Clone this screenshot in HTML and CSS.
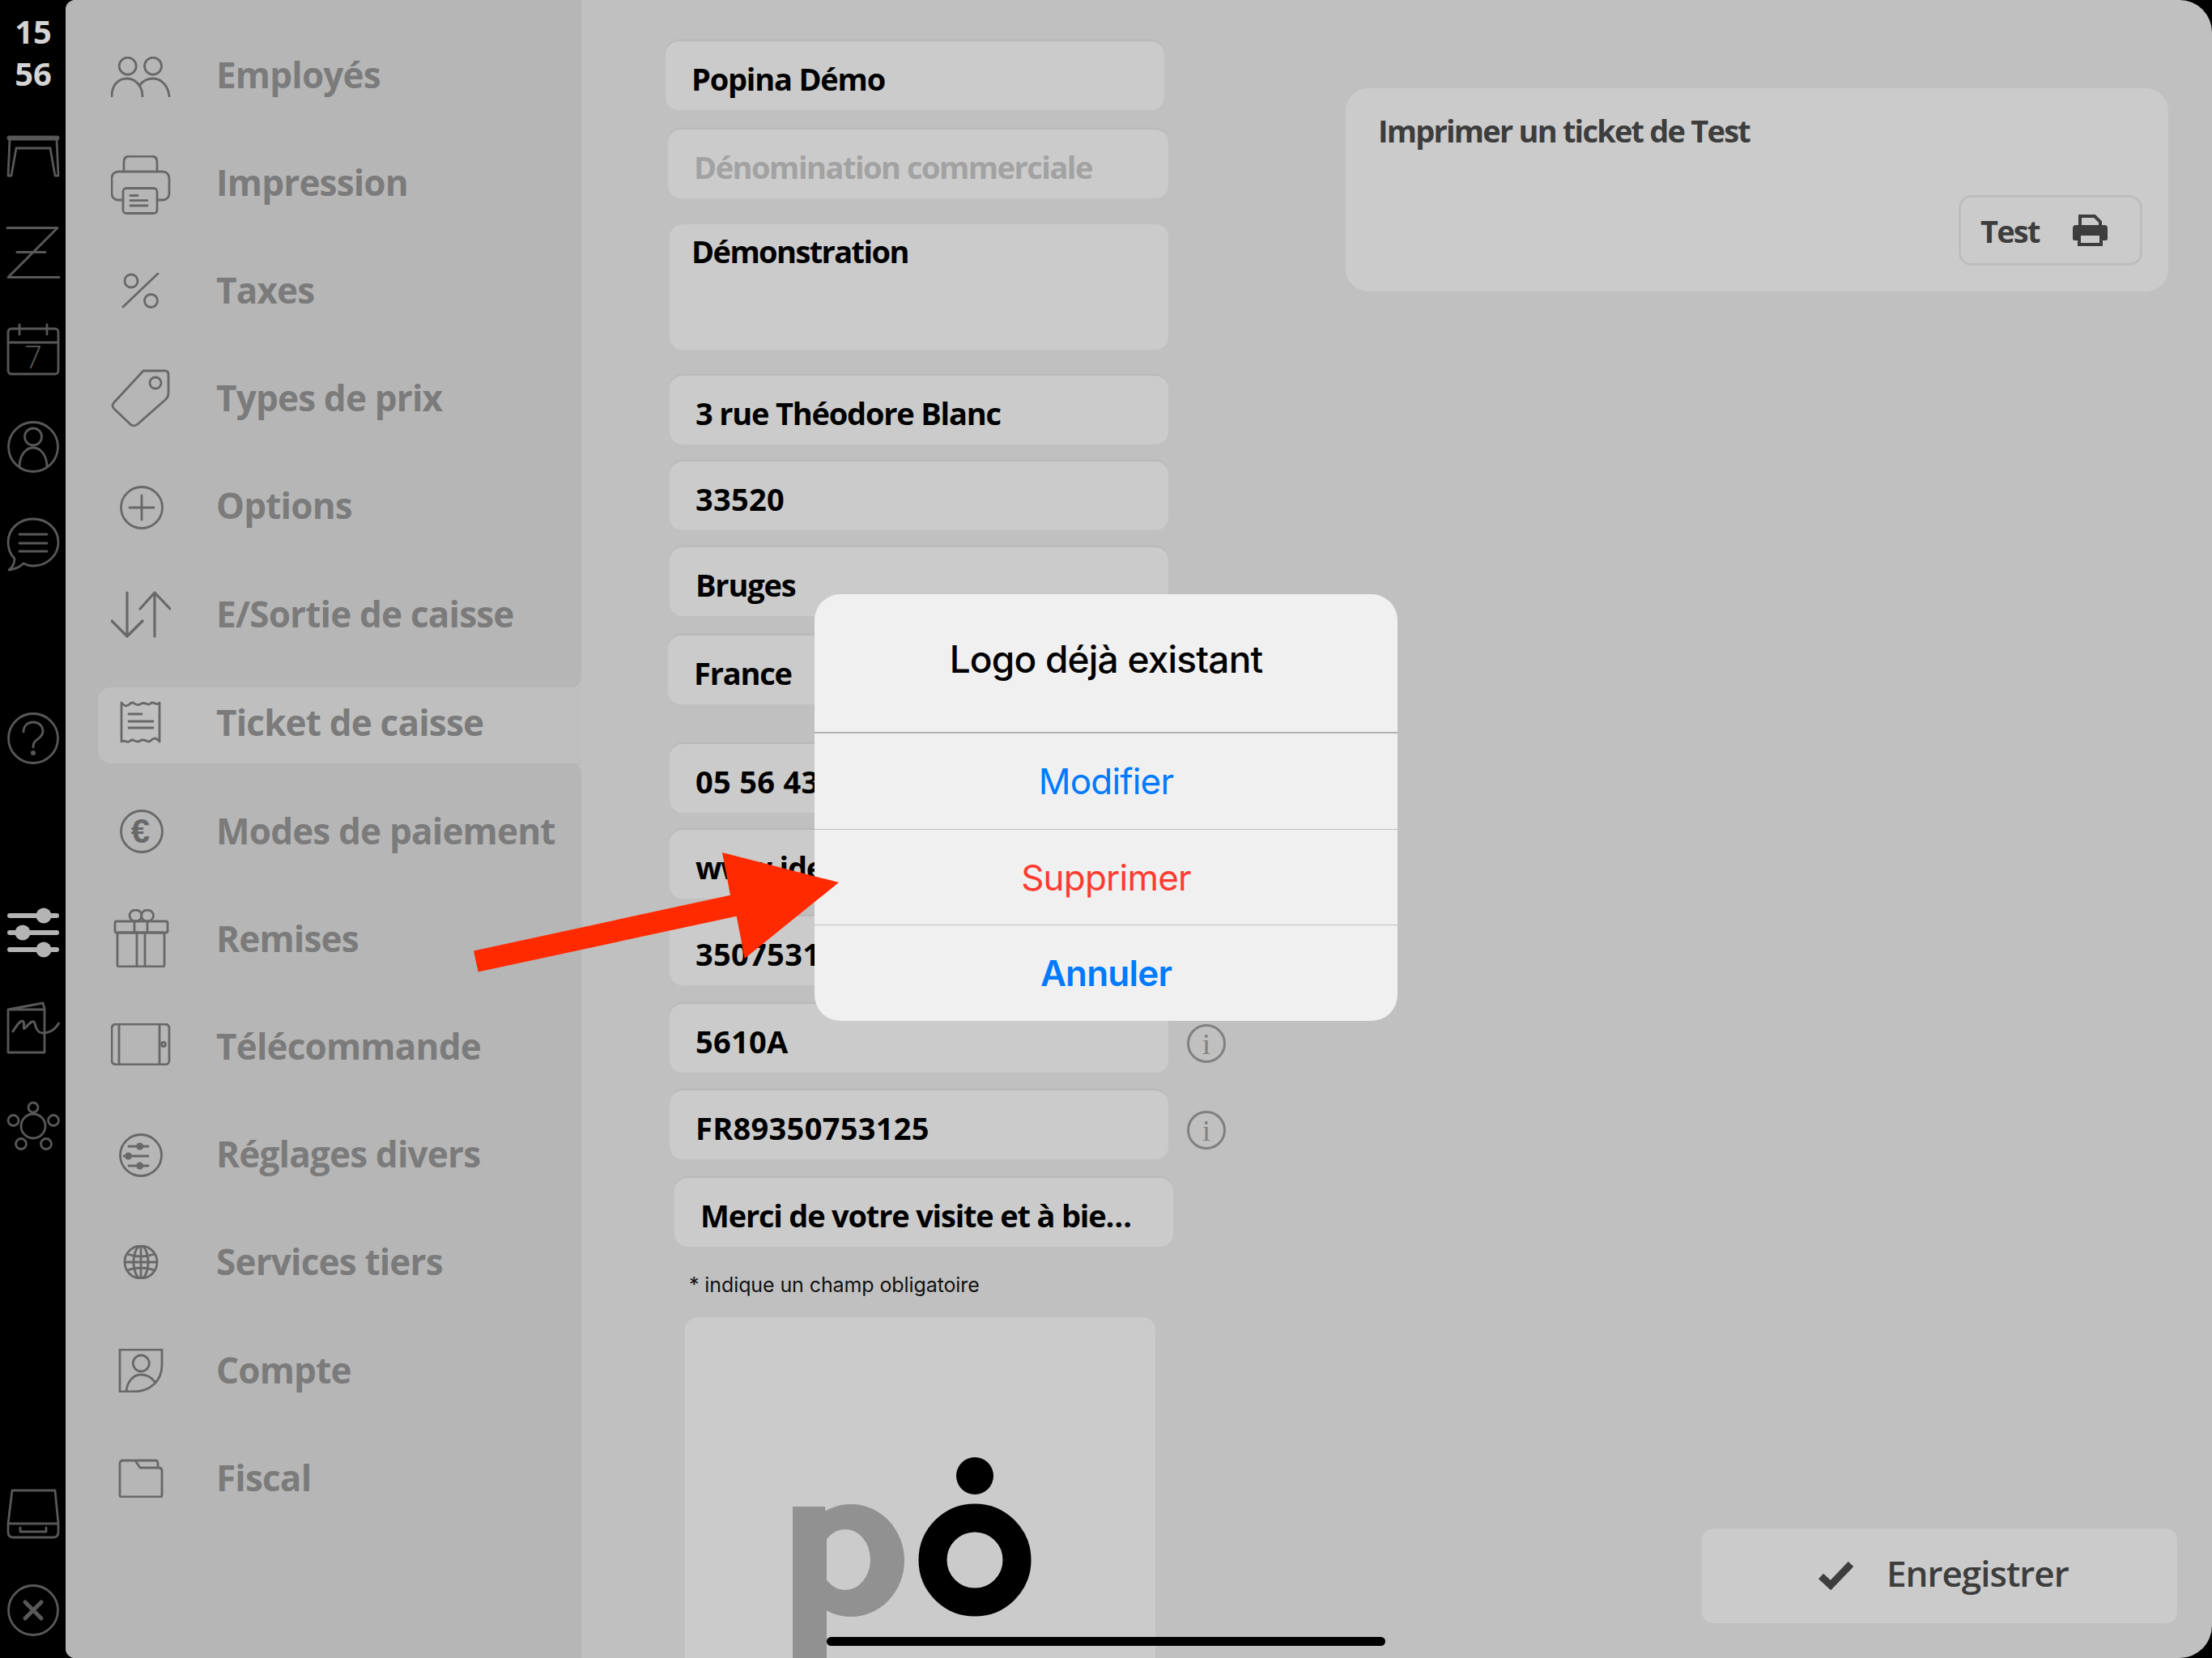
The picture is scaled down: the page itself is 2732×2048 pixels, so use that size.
FILE: index.html
```html
<!DOCTYPE html>
<html lang="fr">
<head>
<meta charset="utf-8">
<title>Ticket de caisse</title>
<link rel="stylesheet" href="styles.css">
</head>
<body>
<div class="app">
  <nav class="rail">
    <div class="clock">15<br>56</div>
    <svg class="ri r-table" width="64" height="51" viewBox="0 0 64 51"><rect x="1" y="1" width="62" height="3" rx="1.5"/><path d="M3 4 L1 49 L5 49 L11 15 H53 L59 49 L63 49 L61 4"/></svg>
    <svg class="ri r-z" width="64" height="64" viewBox="0 0 64 64"><path d="M0 1.5 H62 L1 62.5 H64 M12 31.5 H47" stroke-width="3"/></svg>
    <svg class="ri r-cal" width="64" height="63" viewBox="0 0 64 63"><rect x="1" y="5" width="62" height="56" rx="4"/><path d="M1 22 H63 M15 0 V12 M49 0 V12"/><text class="cal7" x="32" y="54" text-anchor="middle">7</text></svg>
    <svg class="ri r-user" width="64" height="64" viewBox="0 0 64 64"><circle cx="32" cy="32" r="30.5"/><circle cx="32" cy="19.5" r="10.5"/><path d="M15 57 C15 42 23 33 32 33 C41 33 49 42 49 57"/></svg>
    <svg class="ri r-chat" width="64" height="66" viewBox="0 0 64 66"><path d="M32 1 C15 1 1 13 1 30 C1 38 4 45 9 50 C9 56 6 61 2 64 C10 63 16 60 20 56 C24 58 28 59 32 59 C49 59 63 46 63 30 C63 13 49 1 32 1 Z"/><path d="M15 20 H49 M15 31 H49 M15 41 H49"/></svg>
    <svg class="ri r-help" width="64" height="64" viewBox="0 0 64 64"><circle cx="32" cy="32" r="30.5"/><path d="M20 24 C20 16 26 12 32 12 C39 12 44 17 44 23 C44 30 38 32 34 36 C32 38 32 40 32 43"/><circle class="fill" cx="32" cy="50" r="3"/></svg>
    <svg class="ri r-sliders" width="64" height="62" viewBox="0 0 64 62"><path d="M3 10 H61 M3 31 H61 M3 52 H61"/><circle class="k" cx="45" cy="10" r="9.5"/><circle class="k" cx="19" cy="31" r="9.5"/><circle class="k" cx="45" cy="52" r="9.5"/></svg>
    <svg class="ri r-menu" width="64" height="64" viewBox="0 0 64 64"><path d="M1 9 L44 1 L46 8 M1 9 H46 V62 H1 Z"/><path d="M7 36 C12 28 17 21 20 24 C22 27 18 36 23 31 C28 25 33 21 34 26 C35 31 37 39 46 38 C54 37 60 32 63.5 26" stroke-width="3"/></svg>
    <svg class="ri r-net" width="64" height="60" viewBox="0 0 64 60"><circle cx="32" cy="7" r="6"/><circle cx="7.5" cy="23" r="6.5"/><circle cx="57" cy="23" r="6.5"/><circle cx="32" cy="30" r="15"/><circle cx="17" cy="52" r="6.5"/><circle cx="48" cy="52" r="6.5"/></svg>
    <svg class="ri r-drawer" width="64" height="60" viewBox="0 0 64 60"><path d="M6 1 H59 L63 42 V52 Q63 59 57 59 H7 Q1 59 1 52 V42 Z M1 42 H63 M16 47 V52 H48 V47"/></svg>
    <svg class="ri r-close" width="64" height="64" viewBox="0 0 64 64"><circle cx="32" cy="32" r="30.5"/><path d="M22 22 L42 42 M42 22 L22 42" stroke-width="5"/></svg>
  </nav>

  <main class="main">
    <aside class="side">
      <div class="side-top">
        <div class="item"><span class="ic d3"><svg width="74" height="50" viewBox="0 0 74 50"><circle cx="20.7" cy="11.6" r="10.5"/><circle cx="52" cy="11.6" r="10.5"/><path d="M1 49 C1 35 9 27 20 27 C31 27 39 37 39 49 M35 36 C39 30 45 27 52 27 C63 27 71 37 72 49"/></svg></span><span class="lbl">Employés</span></div>
        <div class="item"><span class="ic d4"><svg width="74" height="73" viewBox="0 0 74 73"><path d="M16 20 V8 Q16 1 23 1 H50 Q57 1 57 8 V20"/><rect x="1" y="20" width="71" height="35" rx="8"/><rect class="paper" x="15" y="40.5" width="42" height="31" rx="4"/><path d="M24 49.5 H33 M24 55.7 H45 M24 62 H45"/></svg></span><span class="lbl">Impression</span></div>
        <div class="item"><span class="ic d1"><svg width="74" height="44" viewBox="0 0 74 44"><circle cx="25" cy="10" r="8"/><circle cx="49.5" cy="34.5" r="8"/><path d="M15 42 L58 1"/></svg></span><span class="lbl">Taxes</span></div>
        <div class="item"><span class="ic d1"><svg width="74" height="72" viewBox="0 0 74 72"><path d="M40 2 H67 Q71 2 71 7 V30 Q71 34 68 37 L33 68 Q29 71 25 69 L4 49 Q0 45 4 41 Z"/><circle cx="55" cy="17" r="7"/></svg></span><span class="lbl">Types de prix</span></div>
        <div class="item"><span class="ic d3"><svg width="74" height="54" viewBox="0 0 74 54"><circle cx="38" cy="27" r="25.5"/><path d="M38 12 V42 M23 27 H53"/></svg></span><span class="lbl">Options</span></div>
        <div class="item"><span class="ic d1"><svg width="74" height="58" viewBox="0 0 74 58"><path d="M20 2 V56 M1 37 L20 56 L39 37 M54 56 V2 M36 22 L54 2 L73 22" stroke-width="3.2"/></svg></span><span class="lbl">E/Sortie de caisse</span></div>
      </div>
      <div class="active-wrap">
        <div class="item active"><span class="ic"><svg width="74" height="54" viewBox="-12 0 74 54"><path d="M1 3 C5 8 8 8 12 4 C16 0 18 8 24 5 C30 0 33 8 37 4 C41 0 44 8 48 3 V51 C44 46 41 46 37 50 C33 54 30 46 24 50 C18 54 16 46 12 50 C8 54 5 48 1 51 Z"/><path d="M10 17 H26 M10 26 H40 M10 34 H40"/></svg></span><span class="lbl">Ticket de caisse</span></div>
      </div>
      <div class="side-bottom">
        <div class="item"><span class="ic d1"><svg width="74" height="54" viewBox="0 0 74 54"><circle cx="38" cy="27" r="25.5"/><text class="euro" x="36.5" y="41" text-anchor="middle">€</text></svg></span><span class="lbl">Modes de paiement</span></div>
        <div class="item"><span class="ic"><svg width="74" height="72" viewBox="-4 0 74 72"><ellipse cx="26.5" cy="8" rx="7.5" ry="7"/><ellipse cx="41" cy="8" rx="7.5" ry="7"/><rect x="1" y="15" width="65" height="14" rx="2"/><rect x="4" y="29" width="58" height="42" rx="2"/><path d="M25 15 V29 M41 15 V29 M28 29 V71 M38 29 V71"/></svg></span><span class="lbl">Remises</span></div>
        <div class="item"><span class="ic up2"><svg width="74" height="52" viewBox="0 0 74 52"><rect x="1" y="1" width="71" height="50" rx="5"/><path d="M10 1 V51 M60 1 V51"/><circle cx="65" cy="26" r="2.5"/></svg></span><span class="lbl">Télécommande</span></div>
        <div class="item"><span class="ic d2"><svg width="74" height="54" viewBox="-10 0 74 54"><circle cx="27" cy="27" r="25.5"/><path d="M12 16 H36 M6 28 H36 M12 40 H36"/><circle class="fill" cx="25.7" cy="16" r="4.5"/><circle class="fill" cx="11.5" cy="28" r="4.5"/><circle class="fill" cx="25.7" cy="40" r="4.5"/></svg></span><span class="lbl">Réglages divers</span></div>
        <div class="item"><span class="ic d1"><svg width="74" height="42" viewBox="-16 0 74 42"><circle cx="21" cy="21" r="20"/><ellipse cx="21" cy="21" rx="9" ry="20"/><path d="M21 1 V41 M1 21 H41 M4 11 Q21 17 38 11 M4 31 Q21 25 38 31"/></svg></span><span class="lbl">Services tiers</span></div>
        <div class="item"><span class="ic d1"><svg width="74" height="54" viewBox="-10 0 74 54"><path d="M1 1 H53 V20 C53 40 38 53 18 53 H1 Z"/><circle cx="27.3" cy="18" r="10"/><path d="M9 53 C10 40 18 32 27 32 C35 32 41 36 45 42"/></svg></span><span class="lbl">Compte</span></div>
        <div class="item"><span class="ic d1"><svg width="74" height="48" viewBox="-10 0 74 48"><path d="M3 47 H51 Q53 47 53 45 V15 Q53 11 49 11 H26 L20 2 H5 Q1 2 1 6 V45 Q1 47 3 47 Z M20 2 H46 Q48 3 48 6 V11"/></svg></span><span class="lbl">Fiscal</span></div>
      </div>
    </aside>

    <section class="form">
      <div class="field f1">Popina Démo</div>
      <div class="field f2 placeholder">Dénomination commerciale</div>
      <div class="field area">Démonstration</div>
      <div class="field f3">3 rue Théodore Blanc</div>
      <div class="field f4 num">33520</div>
      <div class="field f4">Bruges</div>
      <div class="field f5">France</div>
      <div class="field f6 num">05 56 43 00 00</div>
      <div class="field f4">www.idee-popina.fr</div>
      <div class="field f8 num">350753125</div>
      <div class="row f4b"><div class="field inrow num">5610A</div><svg class="info" width="48" height="48" viewBox="0 0 48 48"><circle cx="24" cy="24" r="22.5"/><text x="24" y="37" text-anchor="middle">i</text></svg></div>
      <div class="row f4"><div class="field inrow num">FR89350753125</div><svg class="info" width="48" height="48" viewBox="0 0 48 48"><circle cx="24" cy="24" r="22.5"/><text x="24" y="37" text-anchor="middle">i</text></svg></div>
      <div class="field f7">Merci de votre visite et à bie…</div>
      <p class="note">* indique un champ obligatoire</p>
      <div class="logo-box">
        <svg class="logo" width="581" height="421" viewBox="0 0 581 421"><ellipse class="p-out" cx="205" cy="300.5" rx="66" ry="69.5"/><ellipse class="p-in" cx="198" cy="299.5" rx="31" ry="37.5"/><path class="p-stem" d="M133 234 H173 L175 262 V421 H133 Z"/><circle class="o-dot" cx="358" cy="196" r="23"/><circle class="o-ring" cx="358" cy="300" r="52"/></svg>
      </div>
    </section>

    <section class="right">
      <div class="card">
        <div class="card-title">Imprimer un ticket de Test</div>
        <div class="test-btn"><span>Test</span><svg width="45" height="41" viewBox="0 0 45 41"><path class="pr-s" d="M10 16 V3 H28 L35 10 V16"/><path class="pr-f" d="M5 14 H40 Q44 14 44 18 V31 Q44 33 42 33 H37 V27 H8 V33 H3 Q1 33 1 31 V18 Q1 14 5 14 Z"/><path class="pr-s" d="M9 27 V38 H36 V27"/></svg></div>
      </div>
      <div class="save"><svg width="46" height="36" viewBox="0 0 46 36"><path d="M4 18 L16 29 L41 3"/></svg><span>Enregistrer</span></div>
    </section>
  </main>

  <div class="dialog">
    <div class="d-title">Logo déjà existant</div>
    <div class="d-row blue">Modifier</div>
    <div class="d-row red">Supprimer</div>
    <div class="d-row blue strong">Annuler</div>
  </div>

  <svg class="arrow" width="460" height="160" viewBox="0 0 460 160"><polygon points="5,124.5 10.6,150.6 329.7,81.7 339.7,134 456,40 312,3 322,55.7"/></svg>
  <div class="home"></div>
</div>
</body>
</html>
```
FILE: styles.css
```css
* { box-sizing: border-box; }
html, body { margin: 0; padding: 0; background: #000; }
.app { position: relative; width: 2732px; height: 2048px; display: flex; overflow: hidden; background: #000; }

/* left rail */
.rail { width: 81px; flex: none; display: flex; flex-direction: column; padding-left: 9px; }
.clock { width: 64px; margin-top: 13px; margin-bottom: 3px; text-align: center; font: 700 40px/52px "Open Sans", sans-serif; color: #d4d4d4; height: 104px; }
.ri { display: block; fill: none; stroke: #585858; stroke-width: 2.8; stroke-linecap: round; stroke-linejoin: round; flex: none; overflow: visible; }
.ri .fill { fill: #585858; stroke: none; }
.cal7 { font: 300 38px/1 "Open Sans", sans-serif; fill: #585858; stroke: none; }
.r-table { margin-top: 48px; }
.r-z { margin-top: 61px; }
.r-cal { margin-top: 57px; }
.r-user { margin-top: 56px; }
.r-chat { margin-top: 56px; }
.r-help { margin-top: 174px; }
.r-sliders { stroke: #b4b4b4; stroke-width: 6; margin-top: 177px; }
.r-sliders .k { fill: #b4b4b4; stroke: none; }
.r-menu { margin-top: 55px; }
.r-net { margin-top: 59px; }
.r-drawer { margin-top: 419px; }
.r-close { margin-top: 57px; }

/* main panel */
.main { flex: 1; display: flex; background: #c0c0c0; border-radius: 12px 40px 40px 12px; overflow: hidden; height: 2048px; }

/* sidebar */
.side { width: 637px; flex: none; display: flex; flex-direction: column; }
.side-top { background: #b6b6b6; height: 849px; padding-top: 25px; border-bottom-right-radius: 12px; }
.active-wrap { background: #b6b6b6; height: 94px; padding-left: 40px; }
.side-bottom { background: #b6b6b6; flex: 1; padding-top: 16px; border-top-right-radius: 12px; }
.item { height: 133.2px; display: flex; align-items: center; padding-left: 56px; gap: 56px; }
.active { height: 94px; padding: 0 0 8px 16px; background: #bfbfbf; border-radius: 16px 0 0 16px; box-shadow: 0 2px 1px -1px #b2b2b2; }
.ic { width: 74px; flex: none; display: flex; justify-content: center; }
.d1 { padding-top: 2px; }
.d2 { padding-top: 4px; }
.d3 { padding-top: 6px; }
.d4 { padding-top: 8px; }
.up2 { padding-bottom: 4px; }
.ic svg { display: block; fill: none; stroke: #686868; stroke-width: 2.8; stroke-linecap: round; stroke-linejoin: round; }
.ic .fill { fill: #686868; stroke: none; }
.ic .paper { fill: #b6b6b6; }
.euro { font: 700 42px/1 "Liberation Sans", sans-serif; fill: #686868; stroke: none; }
.lbl { font: 700 44px/1 "Open Sans", sans-serif; letter-spacing: -.8px; color: #7b7b7b; white-space: nowrap; }

/* form */
.form { width: 944px; flex: none; height: 2048px; overflow: hidden; display: flex; flex-direction: column; padding-left: 104px; }
.field { width: 616px; height: 85px; flex: none; display: flex; align-items: center; padding: 6px 0 0 32px; background: #cbcbcb; border-radius: 16px; box-shadow: 0 -3px 2px -1px #b8b8b8; font: 700 38px/1 "Open Sans", sans-serif; letter-spacing: -1.2px; color: #000; white-space: nowrap; }
.num { letter-spacing: .3px; }
.f1 { margin-top: 51px; }
.f2 { margin: 24px 0 0 3px; width: 618px; }
.placeholder { color: #a2a2a2; letter-spacing: -1.5px; }
.area { height: 155px; margin: 32px 0 0 5px; box-shadow: none; align-items: flex-start; padding-top: 14px; padding-left: 27px; letter-spacing: -1.6px; }
.f3 { margin: 32px 0 0 5px; }
.f4 { margin: 21px 0 0 5px; }
.f5 { margin: 24px 0 0 3px; width: 618px; }
.f6 { margin: 49px 0 0 5px; }
.f8 { margin: 22px 0 0 5px; }
.row { display: flex; flex: none; align-items: flex-start; gap: 23px; }
.f4b { margin: 23px 0 0 5px; }
.row.f4 { margin-top: 22px; }
.inrow { flex: none; }
.info { display: block; flex: none; margin-top: 25px; fill: none; stroke: #808080; stroke-width: 3; overflow: visible; }
.info text { font: 400 36px/1 "Liberation Serif", serif; fill: #808080; stroke: none; }
.f7 { margin: 23px 0 0 11px; }
.note { margin: 33px 0 0 29px; height: 29px; font: 400 25px/29px Inter, sans-serif; letter-spacing: -.1px; color: #111; white-space: nowrap; }
.logo-box { width: 581px; height: 500px; flex: none; margin: 25px 0 0 24px; background: #cbcbcb; border-radius: 16px; }
.logo { display: block; }
.p-out, .p-stem { fill: #919191; }
.p-in { fill: #cbcbcb; }
.o-dot { fill: #000; }
.o-ring { fill: none; stroke: #000; stroke-width: 35; }

/* right column */
.right { flex: 1; display: flex; flex-direction: column; justify-content: space-between; align-items: flex-end; padding: 109px 54px 43px 0; }
.card { width: 1016px; height: 251px; background: #cbcbcb; border-radius: 28px; display: flex; flex-direction: column; justify-content: space-between; padding: 30px 32px 32px 40px; }
.card-title { font: 700 38px/1.2 "Open Sans", sans-serif; letter-spacing: -1.8px; color: #3d3d3d; white-space: nowrap; }
.test-btn { align-self: flex-end; width: 227px; height: 87px; border: 3px solid #bdbdbd; border-radius: 16px; display: flex; align-items: center; justify-content: space-between; padding: 0 39px 0 24px; font: 700 38px/1 "Open Sans", sans-serif; letter-spacing: -1.8px; color: #3d3d3d; }
.test-btn svg { display: block; }
.pr-s { fill: none; stroke: #3d3d3d; stroke-width: 4; }
.pr-f { fill: #3d3d3d; }
.save { width: 587px; height: 117px; margin-right: -11px; padding: 0 0 7px 143px; background: #cbcbcb; border-radius: 14px; display: flex; align-items: center; gap: 39px; font: 600 44px/1 "Open Sans", sans-serif; letter-spacing: -1px; color: #3d3d3d; }
.save svg { display: block; margin-top: 7px; fill: none; stroke: #3d3d3d; stroke-width: 9; }

/* dialog */
.dialog { position: absolute; left: 1006px; top: 734px; width: 720px; height: 527px; background: #f0f0f0; border-radius: 32px; overflow: hidden; display: flex; flex-direction: column; font-family: Inter, sans-serif; }
.d-title { height: 172px; flex: none; display: flex; align-items: center; justify-content: center; padding-bottom: 10px; font-weight: 500; font-size: 46px; letter-spacing: -.8px; color: #000; border-bottom: 2px solid #b0b0b0; }
.d-row { flex: 1; display: flex; align-items: center; justify-content: center; font-size: 44px; letter-spacing: -.8px; }
.d-row + .d-row { border-top: 1px solid #bfbfbf; }
.blue { color: #007aff; }
.red { color: #ff3b30; }
.strong { font-weight: 600; }

/* overlays */
.arrow { position: absolute; left: 580px; top: 1050px; display: block; }
.arrow polygon { fill: #ff2a00; }
.home { position: absolute; left: 1021px; top: 2022px; width: 690px; height: 11px; border-radius: 6px; background: #000; }
```
